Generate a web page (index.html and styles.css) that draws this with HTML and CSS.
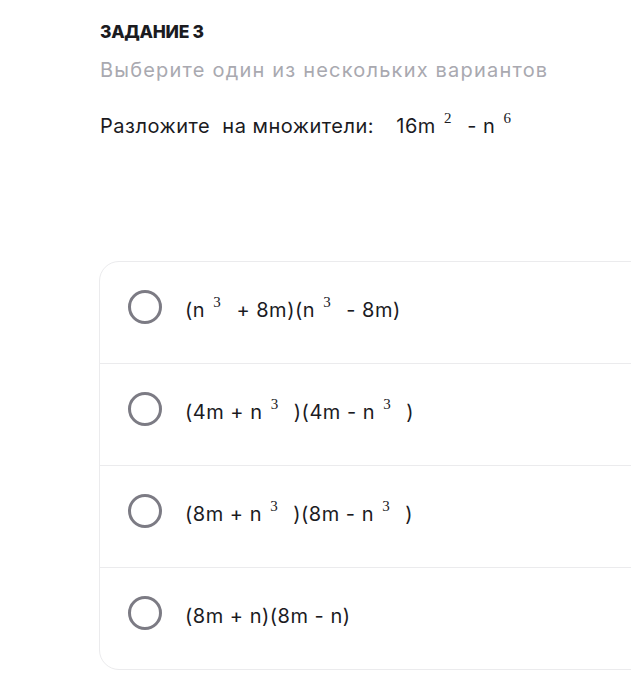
FILE: index.html
```
<!DOCTYPE html>
<html lang="ru">
<head>
<meta charset="utf-8">
<link rel="stylesheet" href="styles.css">
</head>
<body>
<div class="page">
  <div class="task-label">ЗАДАНИЕ 3</div>
  <div class="hint">Выберите один из нескольких вариантов</div>
  <div class="question">Разложите&nbsp; на множители: &nbsp;<span class="expr">16m <sup class="m">2</sup> - n <sup class="m">6</sup></span></div>
  <div class="card">
    <div class="option"><span class="radio"></span><span class="opt-text">(n <sup class="m">3</sup> + 8m)(n <sup class="m">3</sup> - 8m)</span></div>
    <div class="option"><span class="radio"></span><span class="opt-text">(4m + n <sup class="m">3</sup> )(4m - n <sup class="m">3</sup> )</span></div>
    <div class="option"><span class="radio"></span><span class="opt-text">(8m + n <sup class="m">3</sup> )(8m - n <sup class="m">3</sup> )</span></div>
    <div class="option"><span class="radio"></span><span class="opt-text">(8m + n)(8m - n)</span></div>
  </div>
</div>
</body>
</html>
```
FILE: styles.css
```
html, body {
  margin: 0;
  padding: 0;
  background: #ffffff;
  overflow: hidden;
}
.page {
  width: 631px;
  height: 675px;
  overflow: hidden;
  padding-left: 99px;
  padding-top: 21px;
  box-sizing: border-box;
  font-family: Inter, "Noto Sans", sans-serif;
  color: #1b1b1f;
}
.task-label {
  font-size: 17.5px;
  font-weight: 800;
  letter-spacing: -0.3px;
  line-height: 22px;
  padding-left: 1px;
}
.hint {
  margin-top: 14px;
  font-size: 20px;
  line-height: 26px;
  letter-spacing: 1.2px;
  color: #a9a9b0;
  padding-left: 1px;
}
.question {
  margin-top: 30px;
  font-size: 20px;
  line-height: 26px;
  letter-spacing: 0.5px;
  padding-left: 1px;
}
.expr {
  margin-left: 10px;
}
sup.m {
  font-family: "Liberation Serif", "DejaVu Serif", serif;
  font-size: 15px;
  vertical-align: 0;
  position: relative;
  top: -10px;
  line-height: 0;
  padding: 0 9px 0 2px;
}
.card {
  margin-top: 122px;
  width: 620px;
  border: 1px solid #ebebed;
  border-radius: 20px;
  box-sizing: border-box;
}
.option {
  height: 102px;
  display: flex;
  align-items: flex-start;
  padding-left: 28px;
  padding-top: 28px;
  border-top: 1px solid #ebebed;
  box-sizing: border-box;
}
.option:first-child {
  border-top: none;
  height: 101px;
}
.radio {
  width: 34px;
  height: 34px;
  border: 3px solid #7c7b84;
  border-radius: 50%;
  box-sizing: border-box;
  flex-shrink: 0;
}
.opt-text {
  margin-left: 23px;
  font-size: 20px;
  line-height: 26px;
  letter-spacing: 0.5px;
  padding-top: 7px;
}
```
